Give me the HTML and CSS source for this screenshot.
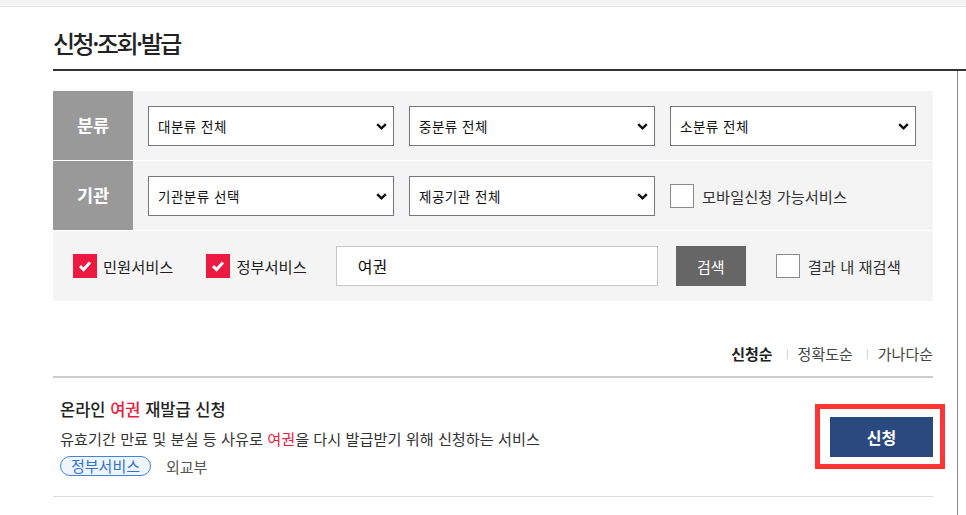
FILE: index.html
```html
<!DOCTYPE html>
<html lang="ko">
<head>
<meta charset="utf-8">
<title>신청·조회·발급</title>
<link rel="stylesheet" href="styles.css">
</head>
<body>
<div class="topbar"></div>
<div class="head">
  <h2 class="title">신청·조회·발급</h2>
</div>
<div class="wrap">
  <div class="content">
    <div class="filter">
      <div class="frow">
        <div class="flabel">분류</div>
        <div class="fcells">
          <div class="sel"><span>대분류 전체</span><svg class="chev" width="11" height="7" viewBox="0 0 11 7"><polyline points="1.2,1.2 5.5,5.3 9.8,1.2" fill="none" stroke="#111" stroke-width="2.4"/></svg></div>
          <div class="sel"><span>중분류 전체</span><svg class="chev" width="11" height="7" viewBox="0 0 11 7"><polyline points="1.2,1.2 5.5,5.3 9.8,1.2" fill="none" stroke="#111" stroke-width="2.4"/></svg></div>
          <div class="sel"><span>소분류 전체</span><svg class="chev" width="11" height="7" viewBox="0 0 11 7"><polyline points="1.2,1.2 5.5,5.3 9.8,1.2" fill="none" stroke="#111" stroke-width="2.4"/></svg></div>
        </div>
      </div>
      <div class="frow">
        <div class="flabel">기관</div>
        <div class="fcells">
          <div class="sel"><span>기관분류 선택</span><svg class="chev" width="11" height="7" viewBox="0 0 11 7"><polyline points="1.2,1.2 5.5,5.3 9.8,1.2" fill="none" stroke="#111" stroke-width="2.4"/></svg></div>
          <div class="sel"><span>제공기관 전체</span><svg class="chev" width="11" height="7" viewBox="0 0 11 7"><polyline points="1.2,1.2 5.5,5.3 9.8,1.2" fill="none" stroke="#111" stroke-width="2.4"/></svg></div>
          <label class="chk"><span class="box"></span><span class="chk-text">모바일신청 가능서비스</span></label>
        </div>
      </div>
      <div class="frow srow">
        <label class="chk on"><span class="box"><svg width="14" height="12" viewBox="0 0 14 12"><polyline points="2,6.2 5.5,9.5 12,2.5" fill="none" stroke="#fff" stroke-width="3"/></svg></span><span class="chk-text">민원서비스</span></label>
        <label class="chk on second"><span class="box"><svg width="14" height="12" viewBox="0 0 14 12"><polyline points="2,6.2 5.5,9.5 12,2.5" fill="none" stroke="#fff" stroke-width="3"/></svg></span><span class="chk-text">정부서비스</span></label>
        <div class="search">여권</div>
        <div class="sbtn">검색</div>
        <label class="chk re"><span class="box"></span><span class="chk-text">결과 내 재검색</span></label>
      </div>
    </div>

    <div class="sort">
      <span class="sort-item active">신청순</span>
      <span class="sep"></span>
      <span class="sort-item">정확도순</span>
      <span class="sep"></span>
      <span class="sort-item">가나다순</span>
    </div>

    <div class="item">
      <div class="item-info">
        <div class="item-title">온라인 <em>여권</em> 재발급 신청</div>
        <div class="item-desc">유효기간 만료 및 분실 등 사유로 <em>여권</em>을 다시 발급받기 위해 신청하는 서비스</div>
        <div class="item-meta"><span class="tag">정부서비스</span><span class="org">외교부</span></div>
      </div>
      <div class="btn-wrap">
        <div class="apply">신청</div>
        <div class="mark"></div>
      </div>
    </div>
  </div>
</div>
</body>
</html>
```

FILE: styles.css
```css
* { box-sizing: border-box; }
html, body { margin: 0; padding: 0; background: #fff; }
body {
  font-family: "Noto Sans CJK KR", "Malgun Gothic", "Noto Sans", sans-serif;
  color: #222;
  width: 966px;
  height: 515px;
  overflow: hidden;
}
.topbar {
  height: 7px;
  background: #f5f4f4;
  border-bottom: 1px solid #e6e4e4;
}
.head {
  margin-left: 53px;
  padding-top: 21px;
  border-bottom: 2px solid #333;
}
.title {
  margin: 0;
  font-size: 24px;
  font-weight: 500;
  line-height: 30px;
  letter-spacing: -2.5px;
  color: #222;
  padding-bottom: 11px;
}
.wrap {
  width: 958px;
  padding-left: 53px;
  border-right: 1px solid #8a8a8a;
  height: 460px;
}
.content {
  width: 880px;
  padding-top: 20px;
}
.filter {
  background: #f4f4f4;
}
.frow {
  display: flex;
  height: 70px;
  border-bottom: 1px solid #fff;
}
.frow.srow { border-bottom: 0; align-items: center; padding-left: 20px; }
.flabel {
  width: 80px;
  background: #999;
  color: #fff;
  font-weight: 700;
  font-size: 17.5px;
  display: flex;
  align-items: center;
  justify-content: center;
  padding-bottom: 3px;
}
.fcells {
  flex: 1;
  display: grid;
  grid-template-columns: repeat(3, 1fr);
  column-gap: 15px;
  align-items: center;
  padding: 0 17px 0 15px;
}
.sel {
  height: 40px;
  background: #fff;
  border: 1px solid #76767f;
  display: flex;
  align-items: center;
  justify-content: space-between;
  padding: 0 6px 0 9px;
  font-size: 13.5px;
  letter-spacing: 0.5px;
  color: #111;
}
.chev { display: block; margin-top: 1px; }
.chk {
  display: flex;
  align-items: center;
}
.chk .box {
  width: 24px;
  height: 24px;
  border: 1px solid #8a8a8a;
  background: #fff;
  display: flex;
  align-items: center;
  justify-content: center;
  flex: none;
}
.chk.on .box {
  background: #ec1940;
  border-color: #ec1940;
}
.chk-text {
  margin-left: 8px;
  font-size: 15.3px;
  color: #333;
  line-height: 20px;
}
.chk.on .chk-text { margin-left: 6px; color: #222; }
.chk.second { margin-left: 33px; }
.search {
  margin-left: 29px;
  width: 322px;
  height: 40px;
  background: #fff;
  border: 1px solid #c6c6c6;
  padding-left: 21px;
  font-size: 16px;
  line-height: 38px;
  color: #111;
}
.sbtn {
  margin-left: 18px;
  width: 70px;
  height: 40px;
  background: #666;
  color: #fff;
  font-size: 15px;
  display: flex;
  align-items: center;
  justify-content: center;
}
.chk.re { margin-left: 30px; }
.sort {
  margin-top: 43px;
  padding-bottom: 12px;
  border-bottom: 2px solid #ccc;
  display: flex;
  justify-content: flex-end;
  align-items: center;
  font-size: 15px;
  line-height: 20px;
  color: #444;
}
.sort-item.active { font-weight: 700; color: #222; }
.sep {
  width: 1px;
  height: 10px;
  background: #d4d4d4;
  margin: 0 10px 0 14px;
}
.item {
  display: flex;
  align-items: center;
  justify-content: space-between;
  border-bottom: 1px solid #ddd;
  padding: 20px 0 20px 7px;
}
.item em { font-style: normal; color: #ec1940; }
.item-title {
  font-size: 16.5px;
  font-weight: 500;
  line-height: 22px;
  color: #222;
}
.item-desc {
  margin-top: 7px;
  font-size: 15.2px;
  line-height: 22px;
  color: #333;
}
.item-meta {
  margin-top: 7px;
  display: flex;
  align-items: center;
  height: 20px;
}
.tag {
  border: 1px solid #3f84e0;
  border-radius: 11px;
  background: #eef5ff;
  color: #2e72d8;
  font-size: 15px;
  line-height: 18px;
  padding: 0 10px;
}
.org {
  margin-left: 15px;
  font-size: 15px;
  color: #555;
}
.btn-wrap {
  position: relative;
}
.apply {
  width: 103px;
  height: 40px;
  background: #2a4a7f;
  color: #fff;
  font-weight: 700;
  font-size: 16px;
  display: flex;
  align-items: center;
  justify-content: center;
}
.mark {
  position: absolute;
  left: -15px;
  right: -12px;
  top: -13px;
  bottom: -12px;
  border: 5px solid #ff3434;
}
```
